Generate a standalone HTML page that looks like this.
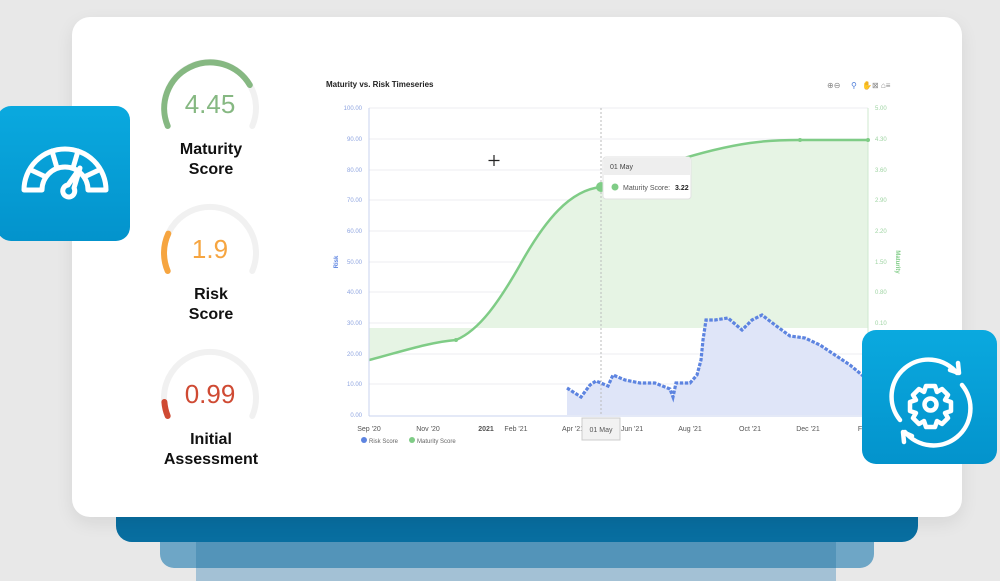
<!DOCTYPE html>
<html><head><style>
*{margin:0;padding:0;box-sizing:border-box}
body{width:1000px;height:581px;background:#e8e8e8;position:relative;overflow:hidden;font-family:"Liberation Sans",sans-serif}
.abs{position:absolute}
.card{left:72px;top:17px;width:890px;height:500px;background:#fff;border-radius:18px;box-shadow:0 6px 18px rgba(0,0,0,.08)}
.band1{left:116px;top:505px;width:802px;height:37px;background:#086ea0;border-radius:0 0 16px 16px}
.band2{left:160px;top:542px;width:714px;height:26px;background:#6ea6c6;border-radius:0 0 14px 14px}
.band2b{left:196px;top:542px;width:640px;height:26px;background:#5394b9}
.band3{left:196px;top:568px;width:640px;height:13px;background:#a3c1d5}
.ibox{width:133px;height:135px;border-radius:14px;background:linear-gradient(#0aa9df,#0393cc)}
.lbl{width:120px;text-align:center;font-weight:bold;font-size:16px;line-height:20px;color:#111}
.num{width:120px;text-align:center;font-size:26px}
</style></head><body>
<div class="abs band2"></div><div class="abs band2b"></div><div class="abs band3"></div>
<div class="abs band1"></div>
<div class="abs card"></div>

<svg class="abs" style="left:0;top:0" width="1000" height="581">
<g fill="none" stroke-width="6" stroke-linecap="round">
<path d="M167.7 126 A46 46 0 1 1 252.3 126" stroke="#f1f1f1"/>
<path d="M167.7 126 A46 46 0 0 1 249.8 85" stroke="#86b882"/>
<path d="M167.7 271 A46 46 0 1 1 252.3 271" stroke="#f1f1f1"/>
<path d="M167.7 271 A46 46 0 0 1 168.3 233.6" stroke="#f6a540"/>
<path d="M167.7 416 A46 46 0 1 1 252.3 416" stroke="#f1f1f1"/>
<path d="M167.7 416 A46 46 0 0 1 164.4 402" stroke="#cf4a33"/>
</g>
<text x="326" y="87" font-size="8" font-weight="bold" fill="#222" font-family="Liberation Sans">Maturity vs. Risk Timeseries</text>
<g font-size="8" fill="#888"><text x="827" y="88">⊕⊖</text><text x="851" y="88" fill="#4a7bd8">⚲</text><text x="862" y="88">✋⊠ ⌂≡</text></g>
<g stroke="#eceef2" stroke-width="1">
<line x1="369" y1="108" x2="868" y2="108"/><line x1="369" y1="139" x2="868" y2="139"/><line x1="369" y1="170" x2="868" y2="170"/><line x1="369" y1="200" x2="868" y2="200"/><line x1="369" y1="231" x2="868" y2="231"/><line x1="369" y1="262" x2="868" y2="262"/><line x1="369" y1="292" x2="868" y2="292"/><line x1="369" y1="323" x2="868" y2="323"/><line x1="369" y1="354" x2="868" y2="354"/><line x1="369" y1="384" x2="868" y2="384"/>
</g>
<path d="M369 360 C400 352 430 342 456 340 C480 330 500 300 520 265 C545 220 570 190 601 187 C640 172 700 150 750 143 C770 140 790 140 800 140 L868 140 L868 328 L369 328 Z" fill="#e6f4e4"/>
<path d="M369 360 C400 352 430 342 456 340 C480 330 500 300 520 265 C545 220 570 190 601 187 C640 172 700 150 750 143 C770 140 790 140 800 140 L868 140" fill="none" stroke="#7fcc86" stroke-width="2.5"/>
<path d="M567 388 L581 397 L590 385 L596 381 L608 386 L613 375 L625 380 L640 383 L655 383 L670 389 L673 397 L676 383 L690 383 L697 375 L701 360 L703 340 L706 320 L715 320 L728 318 L742 330 L752 320 L762 315 L775 325 L790 336 L805 338 L820 345 L835 355 L850 365 L862 375 L868 380 L868 415 L567 415 Z" fill="#dfe5f8"/>
<path d="M567 388 L581 397 L590 385 L596 381 L608 386 L613 375 L625 380 L640 383 L655 383 L670 389 L673 397 L676 383 L690 383 L697 375 L701 360 L703 340 L706 320 L715 320 L728 318 L742 330 L752 320 L762 315 L775 325 L790 336 L805 338 L820 345 L835 355 L850 365 L862 375 L868 380" fill="none" stroke="#5d84e0" stroke-width="3.2" stroke-dasharray="3.5 1.5"/>
<line x1="369" y1="108" x2="369" y2="416" stroke="#c9d3ef"/>
<line x1="868" y1="108" x2="868" y2="416" stroke="#cfe9cf"/>
<line x1="369" y1="416" x2="868" y2="416" stroke="#c9d3ef"/>
<line x1="601" y1="108" x2="601" y2="416" stroke="#bbb" stroke-dasharray="2 2"/>
<circle cx="601" cy="187" r="5" fill="#7fcc86"/>
<circle cx="456" cy="340" r="2" fill="#7fcc86"/><circle cx="800" cy="140" r="2" fill="#7fcc86"/><circle cx="868" cy="140" r="2" fill="#7fcc86"/>
<g font-size="6" fill="#8ea4e0" text-anchor="end">
<text x="362" y="110">100.00</text><text x="362" y="141">90.00</text><text x="362" y="172">80.00</text><text x="362" y="202">70.00</text><text x="362" y="233">60.00</text><text x="362" y="264">50.00</text><text x="362" y="294">40.00</text><text x="362" y="325">30.00</text><text x="362" y="356">20.00</text><text x="362" y="386">10.00</text><text x="362" y="417">0.00</text>
</g>
<g font-size="6" fill="#9fd4a3">
<text x="875" y="110">5.00</text><text x="875" y="141">4.30</text><text x="875" y="172">3.60</text><text x="875" y="202">2.90</text><text x="875" y="233">2.20</text><text x="875" y="264">1.50</text><text x="875" y="294">0.80</text><text x="875" y="325">0.10</text>
</g>
<text x="338" y="262" font-size="6" fill="#5d84e0" font-weight="bold" transform="rotate(-90 338 262)" text-anchor="middle">Risk</text>
<text x="896" y="262" font-size="6" fill="#7fcc86" font-weight="bold" transform="rotate(90 896 262)" text-anchor="middle">Maturity</text>
<g font-size="7" fill="#555" text-anchor="middle">
<text x="369" y="431">Sep '20</text><text x="428" y="431">Nov '20</text><text x="486" y="431" font-weight="bold">2021</text><text x="516" y="431">Feb '21</text><text x="573" y="431">Apr '21</text><text x="632" y="431">Jun '21</text><text x="690" y="431">Aug '21</text><text x="750" y="431">Oct '21</text><text x="808" y="431">Dec '21</text><text x="860" y="431">F</text>
</g>
<rect x="582" y="418" width="38" height="22" fill="#f2f2f2" stroke="#ccc"/>
<text x="601" y="432" font-size="7" fill="#555" text-anchor="middle">01 May</text>
<circle cx="364" cy="440" r="3" fill="#5d84e0"/><text x="369" y="443" font-size="6" fill="#666">Risk Score</text>
<circle cx="412" cy="440" r="3" fill="#7fcc86"/><text x="417" y="443" font-size="6" fill="#666">Maturity Score</text>
<rect x="603" y="157" width="88" height="42" rx="3" fill="#fff" stroke="#e2e2e2"/>
<rect x="604" y="158" width="86" height="17" fill="#eeeeee"/>
<text x="610" y="169" font-size="7" fill="#444">01 May</text>
<circle cx="615" cy="187" r="3.5" fill="#7fcc86"/>
<text x="623" y="190" font-size="7" fill="#555">Maturity Score:</text><text x="675" y="190" font-size="7" font-weight="bold" fill="#222">3.22</text>
<path d="M494 155 V166 M488.5 160.5 H499.5" stroke="#222" stroke-width="1.2"/>
</svg>

<div class="abs num" style="left:150px;top:89px;color:#86b882">4.45</div>
<div class="abs lbl" style="left:151px;top:140px">Maturity<br>Score</div>
<div class="abs num" style="left:150px;top:234px;color:#f6a540">1.9</div>
<div class="abs lbl" style="left:151px;top:285px">Risk<br>Score</div>
<div class="abs num" style="left:150px;top:379px;color:#cf4a33">0.99</div>
<div class="abs lbl" style="left:151px;top:430px">Initial<br>Assessment</div>

<div class="abs ibox" style="left:-3px;top:106px"></div>
<svg class="abs" style="left:0;top:106px" width="130" height="135" fill="none" stroke="#fff" stroke-width="5" stroke-linejoin="round" stroke-linecap="round">
<path d="M24 84 A41 41 0 0 1 106 84 L88 84 A23 23 0 0 0 42 84 Z"/>
<path d="M31 64 L46 71 M52 45 L57 62 M78 45 L73 62 M99 64 L84 71"/>
<path d="M80 62 L68 79 A6 6 0 1 0 74 82 Z"/>
</svg>

<div class="abs ibox" style="left:862px;top:330px;width:135px;height:134px"></div>
<svg class="abs" style="left:862px;top:330px" width="135" height="134" fill="none" stroke="#fff" stroke-width="4.5" stroke-linecap="round" stroke-linejoin="round">
<path d="M38 90 A33 33 0 0 1 95 43"/><path d="M88 40 L97 43 L96 33"/>
<path d="M100 55 A33 33 0 0 1 43 102"/><path d="M50 106 L41 102 L42 112"/>
<path d="M64 56 h9 l2 6 l5 -3 l6 6 l-3 5 l6 2 v9 l-6 2 l3 5 l-6 6 l-5 -3 l-2 6 h-9 l-2 -6 l-5 3 l-6 -6 l3 -5 l-6 -2 v-9 l6 -2 l-3 -5 l6 -6 l5 3 z"/>
<circle cx="68.5" cy="74.5" r="6"/>
</svg>
</body></html>
